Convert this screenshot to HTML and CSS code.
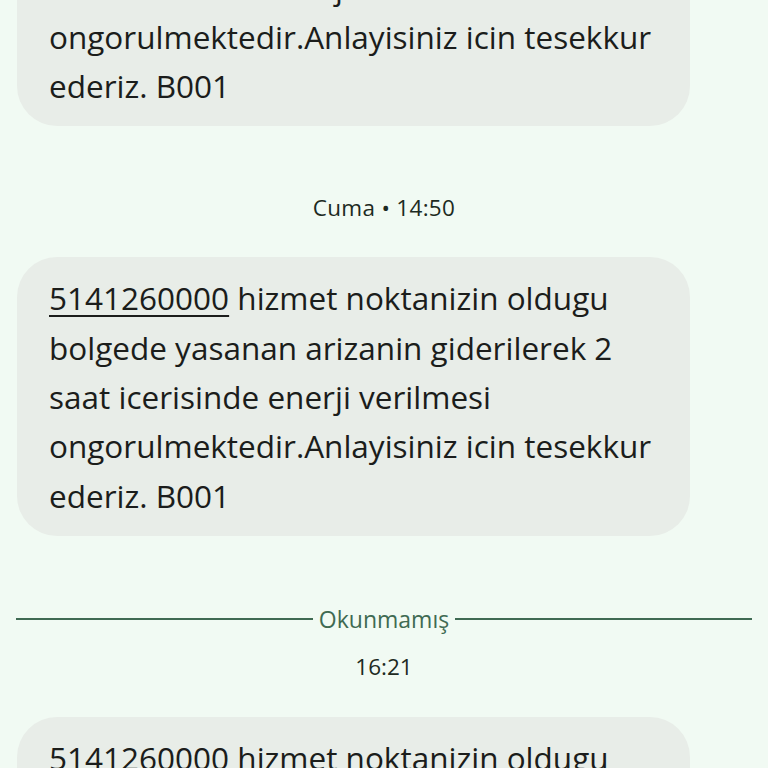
FILE: index.html
```html
<!DOCTYPE html>
<html lang="tr">
<head>
    <meta charset="UTF-8">
    <meta name="viewport" content="width=device-width, initial-scale=1.0">
    <title>Mesajlar</title>
    <link rel="stylesheet" href="styles.css">
</head>
<body>
    <div class="thread">
        <div class="bubble">
            <p><span class="num">5141260000</span> hizmet noktanizin oldugu bolgede yasanan arizanin giderilerek 2 saat icerisinde enerji verilmesi ongorulmektedir.Anlayisiniz icin tesekkur ederiz. B001</p>
        </div>

        <div class="stamp">Cuma • 14:50</div>

        <div class="bubble">
            <p><span class="num">5141260000</span> hizmet noktanizin oldugu bolgede yasanan arizanin giderilerek 2 saat icerisinde enerji verilmesi ongorulmektedir.Anlayisiniz icin tesekkur ederiz. B001</p>
        </div>

        <div class="unread">
            <span class="rule"></span>
            <span class="unread-label">Okunmamış</span>
            <span class="rule"></span>
        </div>

        <div class="stamp stamp-tight">16:21</div>

        <div class="bubble">
            <p><span class="num">5141260000</span> hizmet noktanizin oldugu bolgede yasanan arizanin giderilerek 2 saat icerisinde enerji verilmesi ongorulmektedir.Anlayisiniz icin tesekkur ederiz. B001</p>
        </div>
    </div>
</body>
</html>
```

FILE: styles.css
```css
* {
    margin: 0;
    padding: 0;
    box-sizing: border-box;
}

body {
    font-family: "Open Sans", Roboto, sans-serif;
    background: #f1faf3;
    color: #1b1d1b;
    overflow: hidden;
}

.thread {
    display: flex;
    flex-direction: column;
    align-items: flex-start;
    margin-top: -152px;
    padding: 0 16px;
}

.bubble {
    width: 673px;
    margin-left: 1px;
    background: #e8ede8;
    border-radius: 40px;
    padding: 16px 32px;
}

.bubble p {
    font-size: 31.5px;
    line-height: 49.3px;
}

.num {
    text-decoration: underline;
    text-decoration-thickness: 2px;
    text-underline-offset: 5px;
}

.stamp {
    align-self: stretch;
    text-align: center;
    font-size: 22.5px;
    letter-spacing: 0.3px;
    color: #1d2a22;
    line-height: 28px;
    padding: 68px 0 35px;
}

.stamp-tight {
    padding: 20px 0 36px;
    letter-spacing: 0;
}

.unread {
    align-self: stretch;
    display: flex;
    align-items: center;
    gap: 6px;
    margin-top: 69px;
}

.rule {
    flex: 1;
    height: 2px;
    background: #3f6a52;
}

.unread-label {
    font-size: 23px;
    line-height: 28px;
    color: #3f6a52;
}
```
